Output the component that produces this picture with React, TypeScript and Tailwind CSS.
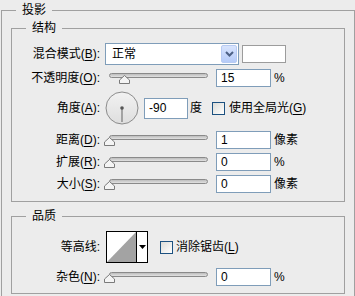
import React from "react"

// 助记键：括号里的字母带下划线
const Key = ({ k }: { k: string }) => (
  <>
    (<span className="underline underline-offset-2">{k}</span>):
  </>
)

function Label({ text, k }: { text: string; k?: string }) {
  return (
    <div className="w-[88px] shrink-0 text-right leading-[16px]">
      {text}
      {k ? <Key k={k} /> : ":"}
    </div>
  )
}

function Slider({ pct }: { pct: number }) {
  const left = 4 + Math.round((pct / 100) * 99) - 5
  return (
    <div className="relative ml-[5px] h-[18px] w-[111px] shrink-0">
      <div className="absolute left-[4px] top-[4px] h-[5px] w-[99px] rounded-full border border-[#8a8a8a] bg-gradient-to-b from-[#bdbdbd] to-[#e2e2e2]" />
      <svg className="absolute top-[6px]" style={{ left }} width="11" height="9" viewBox="0 0 11 9">
        <path d="M5.5 0.5 L10.5 5 L10.5 8.5 L0.5 8.5 L0.5 5 Z" fill="#f4f4f4" stroke="#7a7a7a" />
      </svg>
    </div>
  )
}

function Field({ value, w = "w-[55px]", h = "h-[18px]" }: { value: string; w?: string; h?: string }) {
  return (
    <div className={`${w} ${h} flex shrink-0 items-center border border-[#7f9db9] bg-white pl-[4px] leading-none`}>
      {value}
    </div>
  )
}

function Checkbox() {
  return (
    <div className="h-[13px] w-[13px] shrink-0 border border-[#1c5180] bg-gradient-to-br from-[#dcdcd7] to-white" />
  )
}

function SliderRow({ label, k, pct, value, unit, mt }: { label: string; k: string; pct: number; value: string; unit: string; mt: string }) {
  return (
    <div className={`${mt} flex h-[18px] items-center`}>
      <Label text={label} k={k} />
      <Slider pct={pct} />
      <Field value={value} />
      <span className="ml-[3px]">{unit}</span>
    </div>
  )
}

export default function App() {
  return (
    <div className="h-[296px] w-[355px] overflow-hidden bg-[#ececec] font-[family-name:'Liberation_Sans','Noto_Sans_CJK_SC',sans-serif] text-[12px] text-black">
      <fieldset className="ml-[1px] w-[354px] border border-[#a0a0a0] pb-[10px]">
        <legend className="ml-[14px] px-[6px] leading-[20px]">投影</legend>

        <fieldset className="ml-[9px] w-[334px] border border-[#a0a0a0] pb-[8px]">
          <legend className="ml-[14px] px-[6px] leading-[16px]">结构</legend>

          <div className="mt-[7px] flex h-[22px] items-center">
            <Label text="混合模式" k="B" />
            <div className="ml-[5px] flex h-[22px] w-[134px] items-center justify-between border border-[#7f9db9] bg-white pl-[6px] pr-[1px]">
              <span>正常</span>
              <div className="flex h-[18px] w-[16px] items-center justify-center rounded-[2px] border border-[#b8cbf3] bg-gradient-to-b from-[#d8e4fd] to-[#b6cbf8]">
                <svg width="9" height="6" viewBox="0 0 9 6">
                  <path d="M1 1 L4.5 4.5 L8 1" fill="none" stroke="#4d6185" strokeWidth="2" />
                </svg>
              </div>
            </div>
            <div className="ml-[3px] h-[18px] w-[44px] border border-[#9c9c9c] bg-white" />
          </div>

          <SliderRow label="不透明度" k="O" pct={15} value="15" unit="%" mt="mt-[4px]" />

          <div className="mt-[4px] flex h-[34px] items-center">
            <Label text="角度" k="A" />
            <svg className="ml-[5px] shrink-0" width="34" height="34" viewBox="0 0 34 34">
              <defs>
                <linearGradient id="dial" x1="0" y1="0" x2="0" y2="1">
                  <stop offset="0" stopColor="#f2f2f2" />
                  <stop offset="1" stopColor="#dedede" />
                </linearGradient>
              </defs>
              <circle cx="17" cy="17" r="16" fill="url(#dial)" stroke="#8c8c8c" />
              <line x1="17" y1="17" x2="17" y2="31" stroke="#777" strokeWidth="1.2" />
              <circle cx="17" cy="17" r="1.8" fill="#555" />
            </svg>
            <div className="ml-[5px]">
              <Field value="-90" w="w-[44px]" h="h-[21px]" />
            </div>
            <span className="ml-[2px]">度</span>
            <div className="ml-[10px]">
              <Checkbox />
            </div>
            <span className="ml-[4px]">
              使用全局光(<span className="underline underline-offset-2">G</span>)
            </span>
          </div>

          <SliderRow label="距离" k="D" pct={0} value="1" unit="像素" mt="mt-[6px]" />
          <SliderRow label="扩展" k="R" pct={0} value="0" unit="%" mt="mt-[4px]" />
          <SliderRow label="大小" k="S" pct={0} value="0" unit="像素" mt="mt-[4px]" />
        </fieldset>

        <fieldset className="ml-[9px] mt-[6px] w-[334px] border border-[#a0a0a0] pb-[7px]">
          <legend className="ml-[14px] px-[6px] leading-[16px]">品质</legend>

          <div className="mt-[7px] flex h-[32px] items-center">
            <Label text="等高线" />
            <div className="ml-[6px] flex h-[32px] w-[42px] border border-black bg-white">
              <svg width="29" height="30" viewBox="0 0 29 30" className="shrink-0">
                <path d="M0 30 L29 0 L29 30 Z" fill="#a3a3a3" />
              </svg>
              <div className="flex flex-1 items-center justify-center border-l border-black">
                <svg width="7" height="4" viewBox="0 0 7 4">
                  <path d="M0 0 L7 0 L3.5 4 Z" fill="#000" />
                </svg>
              </div>
            </div>
            <div className="ml-[12px]">
              <Checkbox />
            </div>
            <span className="ml-[3px]">
              消除锯齿(<span className="underline underline-offset-2">L</span>)
            </span>
          </div>

          <SliderRow label="杂色" k="N" pct={0} value="0" unit="%" mt="mt-[5px]" />
        </fieldset>
      </fieldset>
    </div>
  )
}
